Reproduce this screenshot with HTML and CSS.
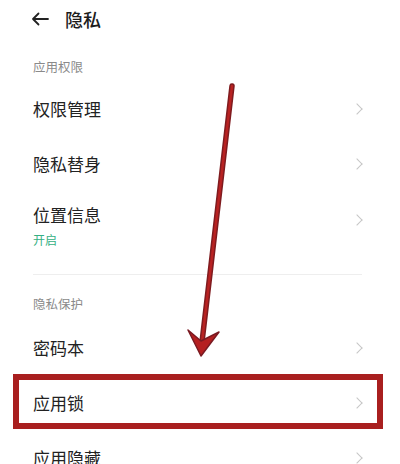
FILE: index.html
```html
<!DOCTYPE html>
<html lang="zh-CN">
<head>
  <meta charset="UTF-8">
  <meta name="viewport" content="width=device-width, initial-scale=1.0">
  <title>隐私</title>
  <link rel="stylesheet" href="styles.css">
</head>
<body>
  <div class="page">
    <div class="header">
      <svg class="back" width="18" height="14" viewBox="0 0 18 14">
        <path d="M17 7H2M7.5 1.5L2 7l5.5 5.5" fill="none" stroke="#222" stroke-width="1.8" stroke-linecap="round" stroke-linejoin="round"/>
      </svg>
      <span class="title">隐私</span>
    </div>

    <div class="section-label">应用权限</div>
    <div class="row">
      <div class="row-text"><span class="row-title">权限管理</span></div>
      <span class="chevron"></span>
    </div>
    <div class="row">
      <div class="row-text"><span class="row-title">隐私替身</span></div>
      <span class="chevron"></span>
    </div>
    <div class="row row-tall">
      <div class="row-text">
        <span class="row-title">位置信息</span>
        <span class="row-sub">开启</span>
      </div>
      <span class="chevron"></span>
    </div>

    <div class="divider"></div>

    <div class="section-label section-label-2">隐私保护</div>
    <div class="row">
      <div class="row-text"><span class="row-title">密码本</span></div>
      <span class="chevron"></span>
    </div>
    <div class="row row-marked">
      <div class="row-text"><span class="row-title">应用锁</span></div>
      <span class="chevron"></span>
    </div>
    <div class="row">
      <div class="row-text"><span class="row-title">应用隐藏</span></div>
      <span class="chevron"></span>
    </div>

    <!-- hand-drawn annotation arrow -->
    <svg class="annotation" width="400" height="464" viewBox="0 0 400 464">
      <line x1="232" y1="86" x2="202" y2="342" stroke="#7f1b1f" stroke-width="5.5" stroke-linecap="round"/>
      <line x1="232" y1="86" x2="202" y2="342" stroke="#b82222" stroke-width="2.5" stroke-linecap="round"/>
      <polygon points="188,330 201,341 219,332 201,356" fill="#b51f20" stroke="#7a1a22" stroke-width="1.5" stroke-linejoin="round"/>
    </svg>
  </div>
</body>
</html>
```

FILE: styles.css
```css
body {
  margin: 0;
  padding: 0;
  background: #ffffff;
  font-family: "Noto Sans CJK SC", "Noto Sans", sans-serif;
  color: #222;
}

.page {
  position: relative;
  width: 400px;
  height: 464px;
  overflow: hidden;
}

.header {
  display: flex;
  align-items: center;
  height: 38px;
  padding-left: 31px;
}

.back {
  display: block;
}

.title {
  margin-left: 16px;
  font-size: 18px;
  font-weight: 500;
  line-height: 24px;
  color: #1c1c1c;
}

.section-label {
  padding: 20px 0 5px 33px;
  font-size: 12.5px;
  line-height: 18px;
  color: #8a8a8a;
}

.section-label-2 {
  padding-bottom: 7px;
}

.row {
  position: relative;
  display: flex;
  align-items: center;
  justify-content: space-between;
  height: 55px;
  padding: 0 37px 0 33px;
}

.row-tall {
  height: 71px;
  align-items: flex-start;
  padding-top: 12px;
  box-sizing: border-box;
}

.row-tall .chevron {
  margin-top: 13px;
}

.row-text {
  display: flex;
  flex-direction: column;
}

.row-title {
  font-size: 17px;
  line-height: 24px;
  color: #222;
}

.row-sub {
  margin-top: 5px;
  font-size: 12px;
  line-height: 16px;
  color: #35b083;
}

.chevron {
  width: 7px;
  height: 7px;
  border-top: 1.5px solid #c6c6c6;
  border-right: 1.5px solid #c6c6c6;
  transform: rotate(45deg);
  margin-right: 2px;
}

.divider {
  height: 1px;
  margin: 12px 38px 0 33px;
  background: #eeeeee;
}

.row-marked::after {
  content: "";
  position: absolute;
  top: -1px;
  bottom: 1px;
  left: 13px;
  right: 17px;
  border: 6px solid #a91f1f;
}

.annotation {
  position: absolute;
  top: 0;
  left: 0;
  pointer-events: none;
}
```
